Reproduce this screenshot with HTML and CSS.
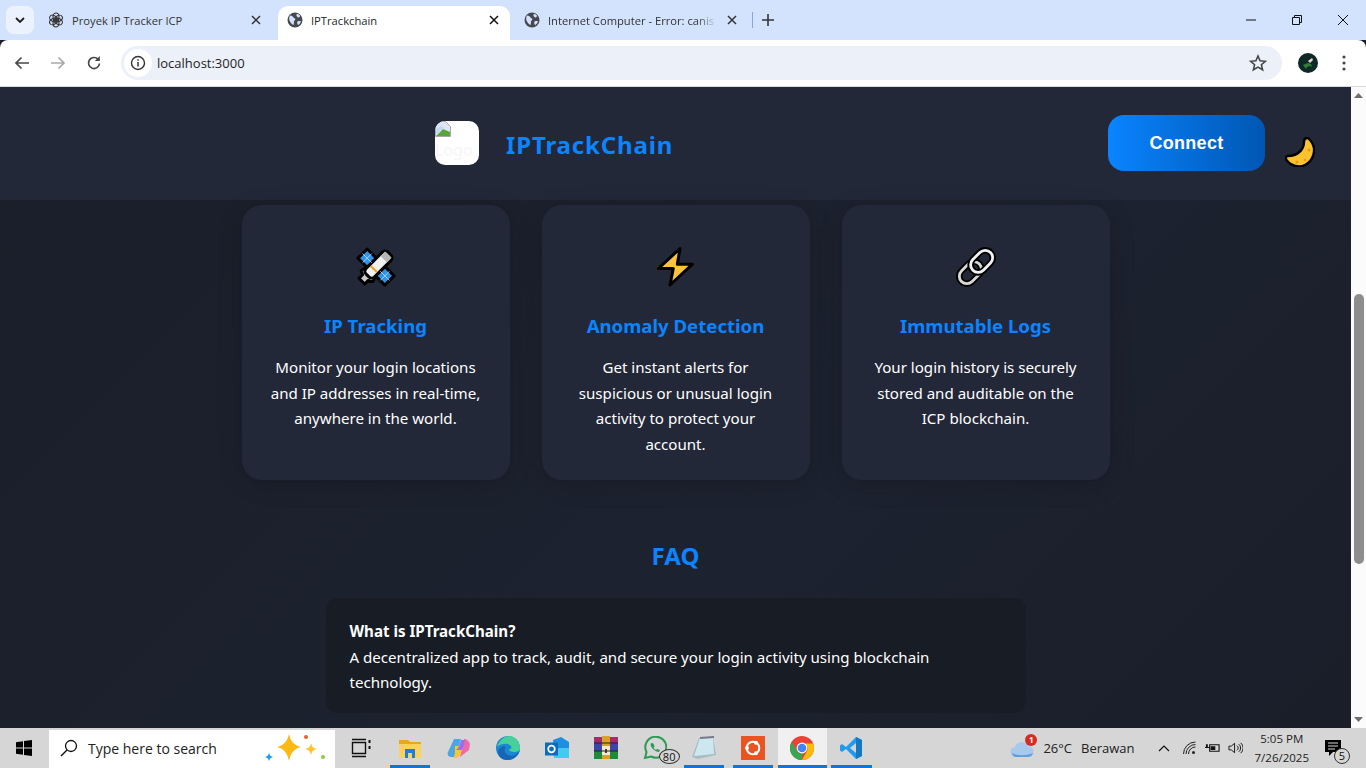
FILE: index.html
```html
<!DOCTYPE html>
<html lang="en">
<head>
<meta charset="utf-8">
<title>IPTrackchain</title>
<link rel="stylesheet" href="styles.css">
</head>
<body>
<svg class="defs" width="0" height="0" aria-hidden="true">
  <defs>
    <symbol id="globe" viewBox="0 0 16 16">
      <circle cx="8" cy="8" r="7.5" fill="#46494e"/>
      <path d="M3 3.5c2 .3 3 1 3.5 2 .3.8 1.6.6 1.8 1.6.2 1-1 1.4-1.3 2.4-.3 1 .2 2.6-.6 3.4C4.500 12 3.500 10.500 3 9.500 2 8.500 1.800 5 3 3.500zM10 1.800c1 .3 2.500 1.200 3.300 2.200l-1.500 1.500c-.8 0-1.800-.6-2.300-1.500-.2-.8 0-1.600.5-2.200zM10.500 9.500c1-.5 2.500-.5 3.400-.3-.3 1.500-1.500 3.200-2.900 3.900-.5-1.200-1.200-2.500-.5-3.600z" fill="#d3e3fd"/>
    </symbol>
    <symbol id="close" viewBox="0 0 10 10">
      <path d="M1 1l8 8M9 1l-8 8" fill="none" stroke="currentColor" stroke-width="1.500"/>
    </symbol>
  </defs>
</svg>

<header class="tabstrip">
  <button class="tab-menu"><svg width="10" height="6" viewBox="0 0 10 6"><path d="M1 1l4 4 4-4" fill="none" stroke="#1f1f1f" stroke-width="1.800"/></svg></button>
  <div class="tab tab-first">
    <svg class="favicon" viewBox="0 0 16 16"><g fill="none" stroke="#333" stroke-width="1.100"><ellipse cx="8" cy="5" rx="3" ry="4"/><ellipse cx="8" cy="5" rx="3" ry="4" transform="rotate(60 8 8)"/><ellipse cx="8" cy="5" rx="3" ry="4" transform="rotate(120 8 8)"/><ellipse cx="8" cy="5" rx="3" ry="4" transform="rotate(180 8 8)"/><ellipse cx="8" cy="5" rx="3" ry="4" transform="rotate(240 8 8)"/><ellipse cx="8" cy="5" rx="3" ry="4" transform="rotate(300 8 8)"/></g></svg>
    <span class="tab-title">Proyek IP Tracker ICP</span>
    <svg class="tab-close"><use href="#close"/></svg>
  </div>
  <div class="tab tab-active">
    <svg class="favicon"><use href="#globe"/></svg>
    <span class="tab-title">IPTrackchain</span>
    <svg class="tab-close"><use href="#close"/></svg>
  </div>
  <div class="tab tab-last">
    <svg class="favicon"><use href="#globe"/></svg>
    <span class="tab-title tab-fade">Internet Computer - Error: canis</span>
    <svg class="tab-close"><use href="#close"/></svg>
  </div>
  <span class="tab-divider"></span>
  <svg class="new-tab" viewBox="0 0 12 12"><path d="M6 0v12M0 6h12" stroke="#333" stroke-width="1.600"/></svg>
  <div class="window-controls">
    <svg viewBox="0 0 12 12"><path d="M1 6h10" stroke="#111" stroke-width="1"/></svg>
    <svg viewBox="0 0 12 12"><path d="M1.500 3.500h7v7h-7zM3.500 3.500v-2h7v7h-2" fill="none" stroke="#111" stroke-width="1"/></svg>
    <svg viewBox="0 0 12 12"><path d="M1 1l10 10M11 1L1 11" stroke="#111" stroke-width="1"/></svg>
  </div>
</header>

<nav class="toolbar">
  <svg class="nav-icon" viewBox="0 0 16 16"><path d="M15 8H2M7.500 2.500L2 8l5.500 5.500" fill="none" stroke="#474747" stroke-width="1.700"/></svg>
  <svg class="nav-icon" viewBox="0 0 16 16"><path d="M1 8h13M8.500 2.500L14 8l-5.500 5.500" fill="none" stroke="#a9a9a9" stroke-width="1.700"/></svg>
  <svg class="nav-icon" viewBox="0 0 16 16"><path d="M13.500 8.500a5.500 5.500 0 1 1-1.500-4.300" fill="none" stroke="#474747" stroke-width="1.700"/><path d="M13.800 1v5h-5z" fill="#474747"/></svg>
  <div class="omnibox">
    <span class="site-info"><svg viewBox="0 0 16 16" width="16" height="16"><circle cx="8" cy="8" r="6.500" fill="none" stroke="#333" stroke-width="1.400"/><path d="M8 7v4.500M8 4.200v1.600" stroke="#333" stroke-width="1.500"/></svg></span>
    <span class="url">localhost:3000</span>
    <svg class="star" viewBox="0 0 18 18"><path d="M9 2l2.100 4.800 5.200.5-3.900 3.400 1.200 5.100L9 13.100l-4.600 2.700 1.200-5.100-3.900-3.400 5.200-.5z" fill="none" stroke="#474747" stroke-width="1.600"/></svg>
  </div>
  <svg class="avatar" viewBox="0 0 20 20"><circle cx="10" cy="10" r="10" fill="#0d2a26"/><path d="M5 12l5-2 3 1 1 3-2-1-3 1-1 2z" fill="#2f7d3a"/><path d="M10 8l4-3 1 2-3 3z" fill="#e6d6cf"/></svg>
  <svg class="kebab" viewBox="0 0 4 16"><circle cx="2" cy="2" r="1.600" fill="#474747"/><circle cx="2" cy="8" r="1.600" fill="#474747"/><circle cx="2" cy="14" r="1.600" fill="#474747"/></svg>
</nav>

<div class="viewport">
  <div class="page">
    <section class="site-header">
      <div class="brand">
        <div class="logo">
          <svg class="broken-img" viewBox="0 0 16 16"><path d="M.5.500h10l5 5v10H.5z" fill="#dfe6f3" stroke="#a8a8a8"/><path d="M1 15l7-7 7 3v4z" fill="#58a53c"/><path d="M1 8l5-3 3 2-7 7z" fill="#c5d6f0"/></svg>
          <span class="logo-alt">Logo</span>
        </div>
        <h1 class="brand-name">IPTrackChain</h1>
      </div>
      <div class="header-actions">
        <button class="connect">Connect</button>
        <span class="theme-toggle">
          <svg viewBox="0 0 30 30" width="30" height="30"><path d="M22 1c-2 0-3 2-3 4 0 8-7 14-16 14-2 0-3 2-1.500 4C6 29 14 31 20 28 28 24 33 12 25 3c-1-1.500-2-2-3-2z" fill="#fcc22f" stroke="#000" stroke-width="2.400" stroke-linejoin="round"/><circle cx="24" cy="13" r="1.500" fill="#e49b1a"/><circle cx="12" cy="25" r="1.500" fill="#e49b1a"/><circle cx="20" cy="23" r="1.300" fill="#e49b1a"/></svg>
        </span>
      </div>
    </section>

    <main class="content">
      <div class="features">
        <article class="card">
          <svg class="card-icon" viewBox="0 0 40 40">
            <g transform="rotate(-45 20 20)">
              <g stroke="#000" stroke-width="3" stroke-linejoin="round">
                <rect x="13.500" y="1" width="13" height="13" fill="#2f94e8"/>
                <rect x="13.500" y="26" width="13" height="13" fill="#2f94e8"/>
                <path d="M7 12a8 8 0 0 1 0 16l-2-4H0v-8h5z" fill="#c9c9c9"/>
                <rect x="8" y="14" width="31" height="12" rx="4" fill="#f1f1f1"/>
              </g>
              <path d="M31 15.500h6.500v9H31z" fill="#b5b5b5"/>
              <path d="M17 15.500v9" stroke="#f0a21b" stroke-width="2"/>
              <path d="M20 1v13M13.500 7.500h13M20 26v13M13.500 32.500h13" stroke="#bfe0fa" stroke-width=".8"/>
            </g>
          </svg>
          <h2 class="card-title">IP Tracking</h2>
          <p class="card-text">Monitor your login locations and IP addresses in real-time, anywhere in the world.</p>
        </article>
        <article class="card">
          <svg class="card-icon" viewBox="0 0 40 40"><path d="M24 1.500L2.500 21.500h14.800L14 38l22.500-20.800H21.300z" fill="#fcc23a" stroke="#000" stroke-width="3" stroke-linejoin="round"/></svg>
          <h2 class="card-title">Anomaly Detection</h2>
          <p class="card-text">Get instant alerts for suspicious or unusual login activity to protect your account.</p>
        </article>
        <article class="card">
          <svg class="card-icon" viewBox="0 0 40 40"><g fill="none" transform="rotate(-45 20 20)"><rect x="-.5" y="12.500" width="25" height="15" rx="7.500" stroke="#000" stroke-width="6.500"/><rect x="-.5" y="12.500" width="25" height="15" rx="7.500" stroke="#d8d8d8" stroke-width="2.800"/><rect x="15.500" y="12.500" width="25" height="15" rx="7.500" stroke="#000" stroke-width="6.500"/><rect x="15.500" y="12.500" width="25" height="15" rx="7.500" stroke="#f2f2f2" stroke-width="2.800"/></g></svg>
          <h2 class="card-title">Immutable Logs</h2>
          <p class="card-text">Your login history is securely stored and auditable on the ICP blockchain.</p>
        </article>
      </div>
      <section class="faq">
        <h2 class="faq-heading">FAQ</h2>
        <div class="faq-item">
          <strong class="faq-q">What is IPTrackChain?</strong>
          <p class="faq-a">A decentralized app to track, audit, and secure your login activity using blockchain technology.</p>
        </div>
      </section>
    </main>
  </div>
  <aside class="scrollbar">
    <svg class="arrow" viewBox="0 0 9 5"><path d="M4.500 0L9 5H0z" fill="#6e6e6e"/></svg>
    <span class="thumb"></span>
    <svg class="arrow arrow-down" viewBox="0 0 9 5"><path d="M4.500 5L9 0H0z" fill="#6e6e6e"/></svg>
  </aside>
</div>

<footer class="taskbar">
  <span class="start"><svg viewBox="0 0 16 16" width="16" height="16"><path d="M0 2.200l7-1v6.300H0zM8 1l8-1v7.500H8zM0 8.500h7v6.300l-7-1zM8 8.500h8V16l-8-1.100z" fill="#000"/></svg></span>
  <div class="search">
    <svg class="search-glass" viewBox="0 0 18 18"><circle cx="11" cy="7" r="5.500" fill="none" stroke="#111" stroke-width="1.300"/><path d="M7 11l-6 6" stroke="#111" stroke-width="1.500"/></svg>
    <span class="search-text">Type here to search</span>
    <svg class="search-sparkle" viewBox="0 0 64 30"><path d="M25 1c2 8 5 11 12 13-7 2-10 5-12 14-2-9-5-12-12-14 7-2 10-5 12-13z" fill="#fdb913"/><path d="M47 10c1 4 2 5 6 6-4 1-5 2-6 6-1-4-2-5-6-6 4-1 5-2 6-6z" fill="#fdc42d"/><path d="M5 20l1.200 2.800L9 24l-2.800 1.200L5 28l-1.200-2.800L1 24l2.800-1.200z" fill="#1e9be8"/><circle cx="42" cy="4" r="2" fill="#e8622a"/><circle cx="59" cy="24" r="2" fill="#8ccb3f"/></svg>
  </div>
  <div class="task-icons">
    <span class="slot"><svg viewBox="0 0 24 24"><path d="M3.500 6.500h13v11h-13zM3 3.500h14M3 20.500h14" fill="none" stroke="#111" stroke-width="1.400"/><path d="M19.500 4h2v3h-2M19.500 10h2v3h-2z" fill="#111"/></svg></span>
    <span class="slot slot-on"><svg viewBox="0 0 24 24"><path d="M1 4h9l2 2h11v5H1z" fill="#e8a81e"/><path d="M1 8h22v14H1z" fill="#fbd35c"/><path d="M7 13h10v9h-3v-5h-4v5H7z" fill="#1c80d6"/></svg></span>
    <span class="slot"><svg viewBox="0 0 24 24"><path d="M7 3h7l-5 18H4c-3 0-4-3-3-5z" fill="#4aa6e8"/><path d="M17 3c3 0 5 2 6 5l-1 6-9 7 4-18z" fill="#f06aa8"/><path d="M8 10h8l-3 9c-1 2-2 3-4 3H5c3-1 3-3 3-12z" fill="#f9c33a"/><path d="M14 4l4 0c-1 5-2 9-4 10h-5c3-2 4-6 5-10z" fill="#9a6cf0"/></svg></span>
    <span class="slot"><svg viewBox="0 0 24 24"><circle cx="12" cy="12" r="12" fill="#1b87d2"/><path d="M1 11C3 3 10 0 14 0c6 1 10 6 10 12 0 3-3 4-6 4-3 0-5-1-5-3 2 0 3-1 2-3-2-3-10-3-14 1z" fill="#46d19a"/><path d="M24 14c-2 6-7 10-13 10-5 0-9-3-9-9 2-4 6-6 8-4-2 2-2 6 2 8 4 2 9 0 12-5z" fill="#1666b8"/></svg></span>
    <span class="slot"><svg viewBox="0 0 24 24"><path d="M8 4l8-3 8 5v15H9z" fill="#1e8fe0"/><path d="M9 12h15v10H9z" fill="#45c9f0"/><path d="M0 6.500h13v13H0z" fill="#0f6cbd"/><circle cx="6.500" cy="13" r="3.300" fill="none" stroke="#fff" stroke-width="1.700"/></svg></span>
    <span class="slot"><svg viewBox="0 0 24 24"><path d="M0 1h24v6H0z" fill="#a62b6b"/><path d="M0 7h24v8H0z" fill="#3c46a8"/><path d="M0 15h24v8H0z" fill="#1f8a3c"/><path d="M8 0h8v23H8z" fill="#d8a12a"/><path d="M8 10h8v9H8z" fill="#f5e9cf"/><path d="M11 13h2v4h-2z" fill="#444"/><path d="M0 7h24M0 15h24" stroke="#222"/></svg></span>
    <span class="slot"><svg viewBox="0 0 24 24"><path d="M2 22l1.500-6A10.500 10.500 0 1 1 8 20.500z" fill="none" stroke="#2c9a57" stroke-width="2"/><path d="M8 7c-1 2 0 4 2 6s4 3 6 3l1-2-3-1-1 1c-1-.5-2-1.500-2.500-2.500l1-1-1-3z" fill="#2c9a57"/></svg><span class="count">80</span></span>
    <span class="slot slot-on"><svg viewBox="0 0 24 24"><path d="M7 2l14-1 3 18-18 4-6-2z" fill="#a9bcc4"/><path d="M8 2l13 0 1 16-20 2z" fill="#cde7ee"/><path d="M8 1l14-1 0 2-14 1z" fill="#778"/></svg></span>
    <span class="slot slot-on"><svg viewBox="0 0 24 24"><path d="M0 0h24v24H0z" fill="#e95420"/><circle cx="12" cy="12" r="6.300" fill="none" stroke="#fff" stroke-width="2"/><circle cx="6" cy="12" r="2" fill="#fff"/><circle cx="15" cy="6.800" r="2" fill="#fff"/><circle cx="15" cy="17.200" r="2" fill="#fff"/></svg></span>
    <span class="slot slot-active slot-on"><svg viewBox="0 0 24 24"><circle cx="12" cy="12" r="12" fill="#ea4335"/><path d="M12 24A12 12 0 0 1 1.600 6L7 15c1 2 3 3 5.500 3z" fill="#34a853"/><path d="M12 24c6.600 0 12-5.400 12-12 0-1.700-.3-3-1-4.500H12l5 2.500c1 2 1 4-.5 6z" fill="#fbbc05"/><circle cx="12" cy="12" r="5.400" fill="#fff"/><circle cx="12" cy="12" r="4.300" fill="#4285f4"/></svg></span>
    <span class="slot slot-on"><svg viewBox="0 0 24 24"><path d="M17 1l6 3v16l-6 3L7 13l-4 3-2-1.500V9.500L3 8l4 3z" fill="#1f9cf0"/><path d="M17 1l6 3v16l-6 3z" fill="#1578c2"/><path d="M17 7l-6 5 6 5z" fill="#d5d5d5"/></svg></span>
  </div>
  <div class="tray">
    <span class="weather"><svg viewBox="0 0 24 20" width="24" height="20"><path d="M6 19a5 5 0 0 1-1-10 7 7 0 0 1 13-1 5.500 5.500 0 0 1 0 11z" fill="#a8c8ec"/><path d="M2 15c6 3 14 3 21 0-1 3-3 4-5 4H6c-2 0-3-1-4-4z" fill="#5f9fe0"/></svg><b class="weather-badge">1</b></span>
    <span class="temp">26°C</span>
    <span class="cond">Berawan</span>
    <svg class="chev" viewBox="0 0 12 7"><path d="M1 6l5-5 5 5" fill="none" stroke="#111" stroke-width="1.200"/></svg>
    <svg class="tray-icon" viewBox="0 0 14 14"><path d="M1 13A12 12 0 0 1 13 1M3.500 13A9.500 9.500 0 0 1 13 3.500M6 13a7 7 0 0 1 7-7" fill="none" stroke="#222"/><circle cx="11" cy="11.500" r="1.500" fill="#222"/></svg>
    <svg class="tray-icon" viewBox="0 0 16 14"><path d="M5 3.500h10v7H5z" fill="none" stroke="#111" stroke-width="1.200"/><path d="M6 5h5v4H6zM0 6h5v1H0zM1 3h2v3H1z" fill="#111"/></svg>
    <svg class="tray-icon" viewBox="0 0 16 14"><path d="M1 5h2.500L7 2v10L3.500 9H1z" fill="none" stroke="#111"/><path d="M9.500 4.500a3 3 0 0 1 0 5M11.500 3a5 5 0 0 1 0 8M13.500 1.500a7 7 0 0 1 0 11" fill="none" stroke="#111"/></svg>
    <div class="clock"><span>5:05 PM</span><span>7/26/2025</span></div>
    <span class="notif"><svg viewBox="0 0 16 16" width="16" height="16"><path d="M0 0h16v12H8l-4 4v-4H0z" fill="#000"/><path d="M3 3h10M3 6h10M3 9h7" stroke="#d5d5d5"/></svg><span class="count notif-count">5</span></span>
  </div>
</footer>
</body>
</html>
```
FILE: styles.css
```css
* { box-sizing: border-box; margin: 0; padding: 0; }
html, body { width: 1366px; height: 768px; overflow: hidden; }
body { display: flex; flex-direction: column; background: #1a1e29; font-family: "Open Sans", "Noto Sans", sans-serif; }
.defs { position: absolute; }
button { border: 0; font: inherit; }

/* tab strip */
.tabstrip { flex: 0 0 40px; background: #d3e3fd; display: flex; align-items: flex-end; padding-left: 6px; color: #333; }
.tab-menu { flex: 0 0 28px; height: 28px; margin: 0 6px 6px 0; background: #ecf2fd; border-radius: 8px; display: flex; align-items: center; justify-content: center; }
.tab { height: 34px; padding-bottom: 6px; display: flex; align-items: center; font-size: 11.200px; font-family: "Open Sans", sans-serif; position: relative; }
.tab-first { width: 236px; padding-left: 8px; padding-right: 15px; margin-right: 2px; }
.tab-active { width: 232px; padding-left: 9px; padding-right: 11px; background: #fff; border-radius: 10px 10px 0 0; color: #1f1f1f; }
.tab-last { width: 242px; padding-left: 14px; padding-right: 15px; }
.favicon { width: 16px; height: 16px; flex: none; }
.tab-title { flex: 1; margin-left: 8px; white-space: nowrap; overflow: hidden; }
.tab-fade { -webkit-mask-image: linear-gradient(90deg, #000 88%, transparent); mask-image: linear-gradient(90deg, #000 88%, transparent); }
.tab-close { width: 10px; height: 10px; flex: none; margin-left: 10px; color: #333; }
.tab-active .tab-close { color: #111; }
.tab-divider { width: 1px; height: 16px; background: #8aa7d6; margin: 0 0 12px 0; }
.new-tab { width: 12px; height: 12px; margin: 0 0 14px 9px; }
.window-controls { margin-left: auto; display: flex; align-self: stretch; align-items: center; gap: 34px; padding-right: 17px; }
.window-controls svg { width: 12px; height: 12px; overflow: visible; }

/* toolbar */
.toolbar { flex: 0 0 47px; background: #fff; border-radius: 8px 8px 0 0; border-bottom: 1px solid #d9d9d9; display: flex; align-items: center; padding: 0 15px 0 14px; }
.nav-icon { width: 16px; height: 16px; flex: none; margin-right: 20px; }
.omnibox { width: 1161px; margin-left: -1px; height: 34px; background: #ebf0f9; border-radius: 17px; display: flex; align-items: center; padding: 0 15px 0 3px; }
.site-info { width: 28px; height: 28px; background: #fff; border-radius: 50%; display: flex; align-items: center; justify-content: center; }
.url { margin-left: 5px; font-size: 13px; color: #1f1f1f; }
.star { width: 18px; height: 18px; margin-left: auto; }
.avatar { width: 20px; height: 20px; margin-left: 16px; }
.kebab { width: 4px; height: 16px; margin-left: 24px; }

/* viewport */
.viewport { flex: 0 0 641px; display: flex; overflow: hidden; }
.page { flex: 1; min-width: 0; background: linear-gradient(135deg, #1a1e29, #1d2230 60%, #1a1e29); color: #fff; font-family: "Noto Sans", "Open Sans", sans-serif; }
.site-header { height: 113px; background: #232839; display: flex; align-items: flex-start; justify-content: space-between; padding: 28px 36px 0 435px; }
.brand { display: flex; align-items: center; gap: 27px; margin-top: 6px; }
.logo { width: 44px; height: 44px; background: #fff; border-radius: 10px; position: relative; overflow: hidden; }
.broken-img { width: 16px; height: 16px; display: block; }
.logo-alt { display: block; font-size: 16px; line-height: 20px; color: #f5f6fa; margin-top: 3px; }
.brand-name { font-size: 24px; line-height: 32px; font-weight: 700; color: #0a84ff; letter-spacing: .85px; padding-top: 4px; }
.header-actions { display: flex; align-items: flex-start; gap: 20px; }
.connect { width: 157px; height: 56px; border-radius: 16px; color: #fff; background: linear-gradient(90deg, #0a84ff, #0056b3); font-family: "Liberation Sans", Arial, sans-serif; font-weight: 700; font-size: 18px; letter-spacing: .3px; }
.theme-toggle { width: 30px; height: 30px; margin-top: 22px; display: block; }
.content { display: flex; flex-direction: column; align-items: center; padding-top: 5px; }
.features { display: flex; gap: 32px; }
.card { width: 268px; height: 275px; background: #232839; border-radius: 20px; padding: 42px 24px 0; text-align: center; box-shadow: 0 4px 24px rgba(0,0,0,.18); }
.card-icon { width: 40px; height: 40px; display: block; margin: 0 auto; }
.card-title { font-size: 18.600px; line-height: 26px; font-weight: 700; color: #0a84ff; margin: 26px 0 16px; }
.card-text { font-size: 15.100px; line-height: 25.600px; color: #fff; }
.faq { width: 700px; margin-top: 60px; }
.faq-heading { font-size: 24px; line-height: 32px; font-weight: 700; color: #0a84ff; text-align: center; margin-bottom: 26px; }
.faq-item { height: 115px; background: #181c25; border-radius: 12px; padding: 21px 24px; font-size: 15.100px; line-height: 25.600px; }
.faq-q { display: block; font-weight: 700; }

/* scrollbar */
.scrollbar { flex: 0 0 15px; background: #fbfbfb; display: flex; flex-direction: column; align-items: center; padding-top: 6px; }
.arrow { width: 9px; height: 5px; }
.thumb { width: 10px; height: 270px; background: #8d8d8d; margin-top: 196px; border-radius: 5px; }
.arrow-down { margin-top: auto; margin-bottom: 6px; }

/* taskbar */
.taskbar { flex: 0 0 40px; background: #d6d6d6; display: flex; align-items: center; color: #222; }
.start { width: 49px; padding-right: 1px; display: flex; justify-content: center; }
.search { width: 286px; height: 38px; margin-top: 2px; padding-bottom: 3px; background: #fff; display: flex; align-items: center; padding-left: 11px; }
.search-glass { width: 18px; height: 18px; }
.search-text { margin-left: 10px; padding-top: 2px; font-size: 14px; color: #222; }
.search-sparkle { width: 64px; height: 30px; margin-left: auto; margin-right: 7px; }
.task-icons { display: flex; align-self: stretch; margin-left: 1px; }
.slot { width: 49.100px; display: flex; align-items: center; justify-content: center; position: relative; }
.slot svg { width: 24px; height: 24px; }
.slot-on::after { content: ""; position: absolute; left: 4.500px; right: 4.500px; bottom: 0; height: 3px; background: #0a78d4; }
.slot-active { background: #f0f0f0; }
.slot-active::after { left: 0; right: 0; }
.count { position: absolute; right: 0; bottom: 4px; width: 21px; height: 15px; border: 1px solid #333; border-radius: 50%; background: #d6d6d6; font-size: 11px; line-height: 13px; text-align: center; color: #111; }
.tray { margin-left: auto; display: flex; align-items: center; font-size: 13px; padding-right: 25px; }
.weather { position: relative; width: 24px; height: 20px; }
.weather-badge { position: absolute; right: -3px; top: -4px; width: 12px; height: 12px; border-radius: 50%; background: #d62b20; color: #fff; font-size: 8px; line-height: 12px; text-align: center; }
.temp { margin-left: 9px; }
.cond { margin-left: 9px; }
.chev { width: 12px; height: 7px; margin-left: 23px; }
.tray-icon { width: 15px; height: 14px; margin-left: 8px; }
.chev + .tray-icon { margin-left: 12px; }
.clock { display: flex; flex-direction: column; align-items: center; margin-left: 12px; font-size: 11.500px; line-height: 19px; }
.notif { position: relative; width: 16px; height: 16px; margin-left: 16px; }
.notif-count { right: -9px; bottom: -8px; width: 16px; height: 16px; line-height: 14px; }
```
